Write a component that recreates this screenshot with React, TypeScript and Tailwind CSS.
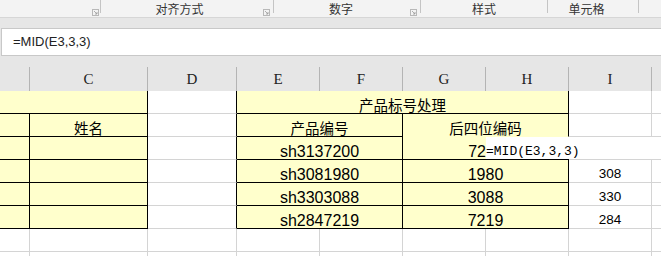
import React from "react";

const Y = "bg-[#ffffcc]";

function Launcher() {
  return (
    <svg width="7" height="7" viewBox="0 0 7 7" className="mt-[9px] shrink-0">
      <rect x="0.5" y="0.5" width="6" height="6" fill="none" stroke="#b8b8b8" />
      <path d="M2 2 L5 5 M5 3 L5 5 L3 5" fill="none" stroke="#9a9a9a" strokeWidth="0.8" />
    </svg>
  );
}

function Divider() {
  return <div className="w-[1px] h-[13px] bg-[#c4c4c4] shrink-0" />;
}

function Ribbon() {
  return (
    <div className="flex h-[18px] bg-[#f3f3f3] border-b border-[#d6d6d6] font-['Noto_Sans_CJK_SC',sans-serif] text-[12px] leading-[17px] text-[#333]">
      <div className="flex w-[101px] shrink-0">
        <div className="flex-1" />
        <Launcher />
        <div className="w-[1px]" />
        <Divider />
      </div>
      <div className="flex w-[173px] shrink-0">
        <div className="w-[157px] text-center">对齐方式</div>
        <div className="w-[5px]" />
        <Launcher />
        <div className="w-[3px]" />
        <Divider />
      </div>
      <div className="flex w-[147px] shrink-0">
        <div className="w-[134px] text-center">数字</div>
        <div className="w-[2px]" />
        <Launcher />
        <div className="w-[3px]" />
        <Divider />
      </div>
      <div className="flex w-[127px] shrink-0">
        <div className="w-[126px] text-center">样式</div>
        <Divider />
      </div>
      <div className="flex w-[91px] shrink-0">
        <div className="w-[77px] text-center">单元格</div>
        <div className="w-[13px]" />
        <Divider />
      </div>
      <div className="flex-1" />
    </div>
  );
}

const cols = "grid grid-cols-[30px_118px_89px_83px_83px_83px_83px_83px_48px] w-[700px]";
const cjk = "font-['Noto_Sans_CJK_SC',sans-serif] text-[14.5px] leading-none pb-[1px]";
const num = "font-['Liberation_Sans',sans-serif] text-[16px] leading-[12px] pb-[1px]";
const mono = "font-['Liberation_Mono',monospace]";

export default function App() {
  const data = [
    { id: "sh3081980", code: "1980", v: "308" },
    { id: "sh3303088", code: "3088", v: "330" },
    { id: "sh2847219", code: "7219", v: "284" },
  ];

  return (
    <div className="w-[661px] h-[256px] overflow-hidden bg-white text-black">
      <Ribbon />
      <div className="h-[10px] bg-[#e6e6e6]" />
      <div className="h-[28px] bg-[#e6e6e6] pl-[1px]">
        <div className="h-full bg-white border-l border-t border-b border-[#c8c8c8] flex items-center pl-[11px] font-['Liberation_Sans',sans-serif] text-[13px] text-[#222]">
          =MID(E3,3,3)
        </div>
      </div>
      <div className="h-[11px] bg-[#e6e6e6]" />

      {/* column headers */}
      <div className={`${cols} h-[24px] bg-[#e6e6e6] font-['Liberation_Serif',serif] text-[15px] text-[#222]`}>
        {["", "C", "D", "E", "F", "G", "H", "I", ""].map((c, i) => (
          <div key={i} className="flex items-center justify-center border-r border-[#b4b4b4]">
            {c}
          </div>
        ))}
      </div>

      {/* sheet body */}
      <div className={`${cols} auto-rows-[23px]`}>
        {/* row 1 */}
        <div className={`col-span-2 ${Y} border-r border-b border-black`} />
        <div className="border-r border-b border-r-black border-b-[#d4d4d4]" />
        <div className={`col-span-4 ${Y} border-r border-b border-black flex items-end justify-center ${cjk}`}>
          产品标号处理
        </div>
        <div className="border-r border-b border-[#d4d4d4]" />
        <div className="border-b border-[#d4d4d4]" />

        {/* row 2 */}
        <div className={`${Y} border-r border-b border-black`} />
        <div className={`${Y} border-r border-b border-black flex items-end justify-center ${cjk}`}>
          姓名
        </div>
        <div className="border-r border-b border-r-black border-b-[#d4d4d4]" />
        <div className={`col-span-2 ${Y} border-r border-b border-black flex items-end justify-center ${cjk}`}>
          产品编号
        </div>
        <div className={`col-span-2 ${Y} border-r border-b border-r-black border-b-[#ffffcc] flex items-end justify-center ${cjk}`}>
          后四位编码
        </div>
        <div className="border-r border-b border-[#d4d4d4]" />
        <div className="border-b border-[#d4d4d4]" />

        {/* row 3 */}
        <div className={`${Y} border-r border-b border-black`} />
        <div className={`${Y} border-r border-b border-black`} />
        <div className="border-r border-b border-r-black border-b-[#d4d4d4]" />
        <div className={`col-span-2 ${Y} border-r border-b border-black flex items-end justify-center ${num}`}>
          sh3137200
        </div>
        <div className={`${Y} border-b border-black flex items-end justify-end ${num}`}>
          72
        </div>
        <div className={`relative z-10 bg-white border-b border-black flex items-end justify-start whitespace-nowrap leading-[11px] pb-[2px] ${mono} text-[13px]`}>
          =MID(E3,3,3)
        </div>
        <div className="bg-white border-b border-[#d4d4d4]" />
        <div className="bg-white border-b border-[#d4d4d4]" />

        {/* rows 4-6 */}
        {data.map((r) => (
          <React.Fragment key={r.id}>
            <div className={`${Y} border-r border-b border-black`} />
            <div className={`${Y} border-r border-b border-black`} />
            <div className="border-r border-b border-r-black border-b-[#d4d4d4]" />
            <div className={`col-span-2 ${Y} border-r border-b border-black flex items-end justify-center ${num}`}>
              {r.id}
            </div>
            <div className={`col-span-2 ${Y} border-r border-b border-black flex items-end justify-center ${num}`}>
              {r.code}
            </div>
            <div className="border-r border-b border-[#d4d4d4] flex items-end justify-center font-['Liberation_Sans',sans-serif] text-[13.5px] leading-[11px] pb-[3px]">
              {r.v}
            </div>
            <div className="border-b border-[#d4d4d4]" />
          </React.Fragment>
        ))}

        {/* empty rows */}
        {[0, 1].map((k) => (
          <React.Fragment key={k}>
            {[0, 1, 2, 3, 4, 5, 6, 7].map((c) => (
              <div key={c} className="border-r border-b border-[#d4d4d4]" />
            ))}
            <div className="border-b border-[#d4d4d4]" />
          </React.Fragment>
        ))}
      </div>
    </div>
  );
}
